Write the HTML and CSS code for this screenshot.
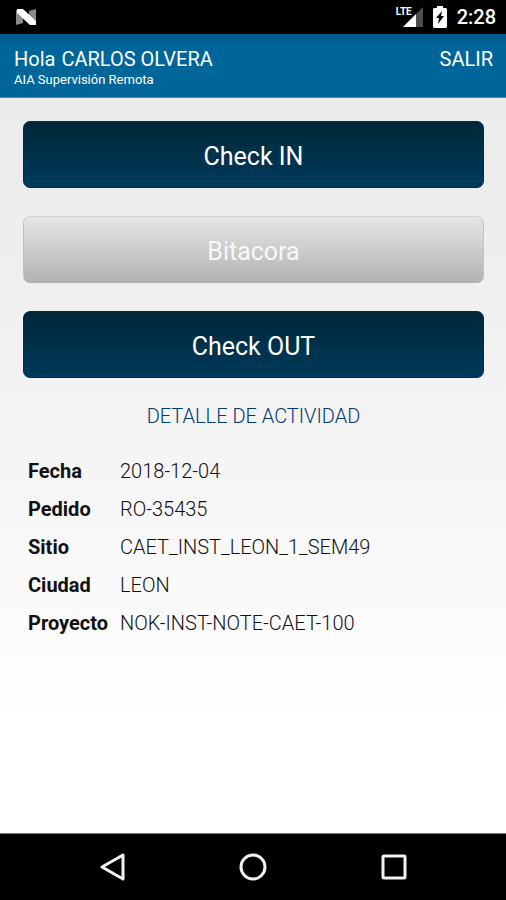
FILE: index.html
```html
<!DOCTYPE html>
<html lang="es">
<head>
    <meta charset="UTF-8">
    <meta name="viewport" content="width=device-width, initial-scale=1.0">
    <title>AIA Supervisión Remota</title>
    <link rel="stylesheet" href="styles.css">
</head>
<body>
    <div class="status-bar">
        <svg class="status-logo" width="22" height="18" viewBox="0 0 22 18">
            <path d="M1 2l7 4v9l-7 2z" fill="#8a8a8a"/>
            <path d="M14 3l7-2v15l-7-6z" fill="#8a8a8a"/>
            <path d="M2 1h6l13 12v4h-6L2 5z" fill="#fff"/>
        </svg>
        <div class="status-icons">
            <div class="signal">
                <svg width="20" height="20" viewBox="0 0 20 20">
                    <path d="M0 20L20 0v20z" fill="#4d4d4d"/>
                    <path d="M0 20L13 7v13z" fill="#fff"/>
                </svg>
                <span class="signal-label">LTE</span>
            </div>
            <svg width="14" height="22" viewBox="0 0 14 22">
                <path d="M4 0h6v2h3l1 1v18l-1 1H1l-1-1V3l1-1h3z" fill="#fff"/>
                <path d="M9 5L3 12h3l-1 6 6-8H8z" fill="#000"/>
            </svg>
            <span class="clock">2:28</span>
        </div>
    </div>

    <header class="app-header">
        <div>
            <h1 class="greeting">Hola <span class="user-name">CARLOS OLVERA</span></h1>
            <p class="app-name">AIA Supervisión Remota</p>
        </div>
        <a href="#" class="logout">SALIR</a>
    </header>

    <main class="content">
        <div class="actions">
            <button type="button" class="action-button">Check IN</button>
            <button type="button" class="action-button" disabled>Bitacora</button>
            <button type="button" class="action-button">Check OUT</button>
        </div>

        <h2 class="detail-title">DETALLE DE ACTIVIDAD</h2>

        <dl class="detail-list">
            <dt>Fecha</dt>
            <dd>2018-12-04</dd>
            <dt>Pedido</dt>
            <dd>RO-35435</dd>
            <dt>Sitio</dt>
            <dd>CAET_INST_LEON_1_SEM49</dd>
            <dt>Ciudad</dt>
            <dd>LEON</dd>
            <dt>Proyecto</dt>
            <dd>NOK-INST-NOTE-CAET-100</dd>
        </dl>
    </main>

    <nav class="nav-bar">
        <button type="button" class="nav-button" aria-label="Atrás">
            <svg width="28" height="28" viewBox="0 0 28 28">
                <path d="M24 2v24L3 14z"/>
            </svg>
        </button>
        <button type="button" class="nav-button" aria-label="Inicio">
            <svg width="28" height="28" viewBox="0 0 28 28">
                <circle cx="14" cy="14" r="12"/>
            </svg>
        </button>
        <button type="button" class="nav-button" aria-label="Recientes">
            <svg width="28" height="28" viewBox="0 0 28 28">
                <rect x="3" y="3" width="22" height="22" rx="1"/>
            </svg>
        </button>
    </nav>
</body>
</html>
```

FILE: styles.css
```css
* {
    margin: 0;
    padding: 0;
    box-sizing: border-box;
}

body {
    display: flex;
    flex-direction: column;
    min-height: 100vh;
    font-family: Roboto, sans-serif;
    background: #000;
    color: #111;
}

/* system status bar */
.status-bar {
    display: flex;
    align-items: center;
    justify-content: space-between;
    height: 34px;
    padding: 0 10px 0 15px;
    background: #000;
    color: #fff;
}

.status-icons {
    display: flex;
    align-items: center;
    gap: 10px;
}

.signal {
    position: relative;
    display: flex;
    padding-left: 7px;
}

.signal-label {
    position: absolute;
    top: 0;
    left: 0;
    font-size: 10px;
    font-weight: 700;
    line-height: 10px;
}

.clock {
    font-size: 20px;
    font-weight: 500;
    line-height: 24px;
}

/* app header */
.app-header {
    display: flex;
    align-items: flex-start;
    justify-content: space-between;
    padding: 13px 13px 8px 14px;
    background: linear-gradient(#005a8a, #006699 20%);
    border-bottom: 1px solid #4f8fb3;
    color: #fff;
}

.greeting {
    font-size: 20px;
    font-weight: 400;
    line-height: 24px;
}

.user-name {
    margin-left: 1px;
}

.app-name {
    font-size: 13px;
    line-height: 18px;
}

.logout {
    font-size: 20px;
    line-height: 24px;
    color: #fff;
    text-decoration: none;
}

/* content */
.content {
    flex: 1;
    padding: 23px 22px 23px 23px;
    background: linear-gradient(#ebebeb, #efefef 25%, #f5f5f5 50%, #fff 85%);
}

.actions {
    display: flex;
    flex-direction: column;
    gap: 28px;
}

.action-button {
    height: 67px;
    padding-top: 3px;
    border: 1px solid #00285a;
    border-radius: 7px;
    background: linear-gradient(#002838, #003a5c);
    color: #fff;
    font-family: inherit;
    font-size: 25px;
    cursor: pointer;
}

.action-button:disabled {
    border-color: #d2d2d2 #c4c4c4 #b0b0b0;
    background: linear-gradient(#e6e6e6, #b2b2b2);
    color: #f8f8f8;
    cursor: default;
}

.detail-title {
    margin-top: 26px;
    color: #003a70;
    font-size: 20px;
    font-weight: 300;
    line-height: 24px;
    text-align: center;
}

.detail-list {
    display: grid;
    grid-template-columns: auto 1fr;
    column-gap: 12px;
    margin-top: 24px;
    padding: 0 5px;
    font-size: 20px;
    line-height: 38px;
}

.detail-list dt {
    font-weight: 700;
}

.detail-list dd {
    font-weight: 300;
}

/* system navigation bar */
.nav-bar {
    display: flex;
    height: 67px;
    padding: 0 42px 0 43px;
    border-top: 1px solid #777;
    background: #000;
}

.nav-button {
    display: flex;
    flex: 1;
    align-items: center;
    justify-content: center;
    border: none;
    background: none;
    cursor: pointer;
}

.nav-button svg {
    fill: none;
    stroke: #f2f2f2;
    stroke-width: 3;
    stroke-linejoin: round;
}
```
